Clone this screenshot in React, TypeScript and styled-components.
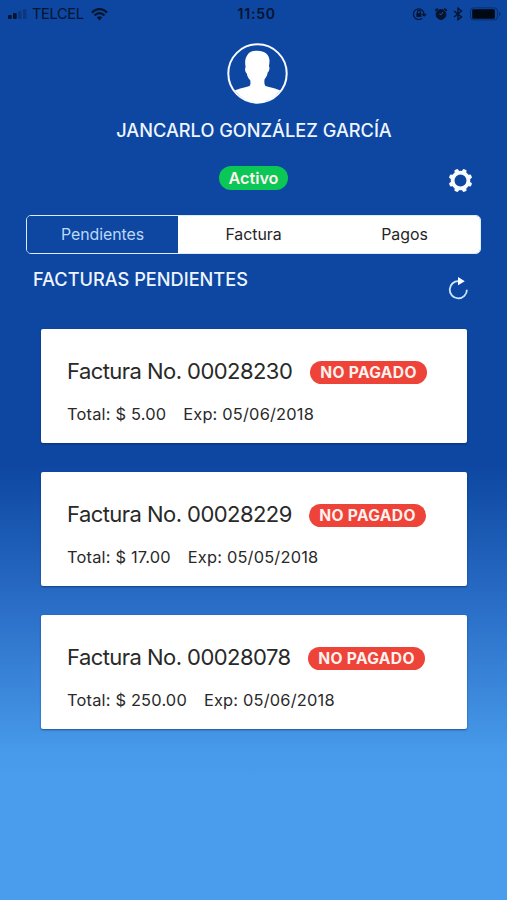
import React from "react";
import styled, { createGlobalStyle } from "styled-components";

const GlobalStyle = createGlobalStyle`
  * { box-sizing: border-box; }
  body { margin: 0; background: #4a9bea; }
`;

const Screen = styled.main`
  width: 507px;
  height: 900px;
  overflow: hidden;
  display: flex;
  flex-direction: column;
  background: linear-gradient(180deg, #0d47a1 0, #0d47a1 465px, #2b6fc8 610px, #4799e9 750px, #4a9cec 780px);
  font-family: Inter, "Liberation Sans", sans-serif;
  color: #fff;
`;

const StatusBar = styled.header`
  height: 28px;
  padding: 0 6px 0 8px;
  display: grid;
  grid-template-columns: 1fr 42px 1fr;
  align-items: center;
  color: #06142f;
`;

const Carrier = styled.div`
  display: flex;
  align-items: center;
  font-size: 14.5px;
  line-height: 28px;
`;

const CarrierName = styled.span`
  margin: 0 7px 0 5px;
  width: 52px;
  letter-spacing: -0.3px;
  white-space: nowrap;
`;

const Clock = styled.time`
  padding-left: 4px;
  text-align: center;
  font-size: 14px;
  font-weight: 600;
  letter-spacing: 0.8px;
  line-height: 28px;
  white-space: nowrap;
`;

const Indicators = styled.div`
  display: flex;
  align-items: center;
  justify-content: flex-end;
`;

const StatusGlyph = styled.span<{ $gap: number }>`
  display: flex;
  margin-right: ${(p) => p.$gap}px;
`;

const Profile = styled.section`
  height: 114px;
  padding-top: 15px;
  padding-left: 7px;
  display: flex;
  flex-direction: column;
  align-items: center;
`;

const Name = styled.h1`
  margin: 14px 7px 0 0;
  padding-left: 1px;
  font-size: 18.2px;
  line-height: 24px;
  font-weight: 500;
  white-space: nowrap;
  color: #eef5ff;
`;

const StateRow = styled.section`
  height: 73px;
  padding: 24px 34px 0;
  display: grid;
  grid-template-columns: 1fr auto 1fr;
  align-items: start;
`;

const Badge = styled.span<{ $tone: "active" | "unpaid" }>`
  height: ${(p) => (p.$tone === "active" ? 24 : 23)}px;
  width: ${(p) => (p.$tone === "active" ? 69 : 117)}px;
  display: flex;
  align-items: center;
  justify-content: center;
  border-radius: 12px;
  font-size: ${(p) => (p.$tone === "active" ? 16.2 : 15.6)}px;
  font-weight: ${(p) => (p.$tone === "active" ? 600 : 700)};
  letter-spacing: ${(p) => (p.$tone === "active" ? 0 : 0.35)}px;
  white-space: nowrap;
  color: #fff1ee;
  background: ${(p) => (p.$tone === "active" ? "#0bc755" : "#ee4338")};
`;

const IconButton = styled.button`
  padding: 0;
  border: 0;
  background: none;
  color: #fff;
  display: flex;
  justify-self: end;
`;

const GearButton = styled(IconButton)`
  margin-top: 2px;
`;

const Tabs = styled.nav`
  height: 39px;
  margin: 0 26px;
  display: grid;
  grid-template-columns: 151px 151px 151px;
  border: 1px solid #dcecff;
  border-radius: 5px;
  overflow: hidden;
`;

const Tab = styled.button<{ $active?: boolean }>`
  border: 0;
  padding: 0;
  font: 400 15.9px/36px Inter, "Liberation Sans", sans-serif;
  letter-spacing: -0.05px;
  color: ${(p) => (p.$active ? "#bcd8fa" : "#252525")};
  background: ${(p) => (p.$active ? "#0d47a1" : "#fff")};
`;

const SectionHeader = styled.section`
  height: 75px;
  padding: 13px 39px 0 33px;
  display: flex;
  justify-content: space-between;
`;

const SectionTitle = styled.h2`
  margin: 0;
  font-size: 18.2px;
  line-height: 24px;
  font-weight: 500;
  white-space: nowrap;
  color: #eef5ff;
`;

const RefreshButton = styled(IconButton)`
  height: 24px;
  margin-top: 10px;
`;

const InvoiceList = styled.section`
  padding: 0 40px 0 41px;
  display: flex;
  flex-direction: column;
  gap: 29px;
`;

const Card = styled.article`
  height: 114px;
  padding: 27px 26px 0;
  border-radius: 2px;
  background: #fff;
  color: #292929;
  box-shadow: 0 1px 2px rgba(8, 32, 70, 0.55);
`;

const CardHeading = styled.div`
  display: flex;
  align-items: center;
  height: 30px;
`;

const InvoiceTitle = styled.h3<{ $width: number }>`
  width: ${(p) => p.$width}px;
  margin: 0;
  font-size: 22px;
  line-height: 30px;
  font-weight: 400;
  letter-spacing: -0.55px;
  white-space: nowrap;
`;

const BadgeSlot = styled.div`
  padding-top: 3px;
`;

const CardDetails = styled.div`
  margin-top: 17px;
  display: flex;
  gap: 17px;
  font-size: 16.4px;
  letter-spacing: 0.19px;
  line-height: 22px;
  white-space: nowrap;
`;

const SignalIcon = () => (
  <svg width="19" height="12" viewBox="0 0 19 12" fill="#06142f">
    <rect x="0" y="7" width="3.7" height="4" rx="1" />
    <rect x="5" y="5" width="3.7" height="6" rx="1" />
    <rect x="10" y="3" width="3.5" height="8" rx="1" opacity=".3" />
    <rect x="15" y="1" width="3.5" height="10" rx="1" opacity=".3" />
  </svg>
);

const WifiIcon = () => (
  <svg width="17" height="13" viewBox="0 0 17 13" fill="none" stroke="#06142f" strokeWidth="2.3">
    <path d="M1 4.7C5-.1 12-.1 16 4.7M3.6 7.6c2.8-3.3 7-3.3 9.8 0" />
    <path d="M5.8 9.6c1.5-1.7 3.9-1.7 5.4 0L8.5 12.6Z" fill="#06142f" stroke="none" />
  </svg>
);

const RotationLockIcon = () => (
  <svg width="15" height="14" viewBox="0 0 15 14" fill="none" stroke="#06142f" strokeWidth="1.2">
    <path d="M10.2 11.2A5.3 5.3 0 1 1 12 7.6M10.2 7l1.9 2 2-2" />
    <rect x="4.4" y="6.1" width="5" height="3.8" fill="#06142f" stroke="none" />
    <path d="M5.4 6V4.8a1.5 1.5 0 0 1 3 0V6" />
  </svg>
);

const AlarmIcon = () => (
  <svg width="14" height="14" viewBox="0 0 14 14" fill="none" stroke="#06142f">
    <circle cx="7" cy="7.5" r="4.9" fill="#06142f" />
    <path d="M1.2 3.8l2.6-2.2M12.8 3.8l-2.6-2.2" strokeWidth="1.8" />
    <path d="M9 5L7 7.8 5.4 7" stroke="#245292" />
  </svg>
);

const BluetoothIcon = () => (
  <svg width="10" height="14" viewBox="0 0 10 14" fill="none" stroke="#06142f" strokeWidth="1.4">
    <path d="M1 4l7.5 6L5 12.7V1.3L8.5 4 1 10" />
  </svg>
);

const BatteryIcon = () => (
  <svg width="31" height="14" viewBox="0 0 31 14">
    <rect x=".5" y=".9" width="27" height="12" rx="3" fill="none" stroke="#092e6b" />
    <rect x="2.2" y="2.2" width="22.6" height="9.6" rx="1" fill="#020914" />
    <path d="M29 5v4c2-.5 2-3.5 0-4Z" fill="#092e6b" />
  </svg>
);

const AvatarIcon = () => (
  <svg width="61" height="62" viewBox="0 0 61 61">
    <circle cx="30.5" cy="30.5" r="29.2" fill="none" stroke="#f8fbff" strokeWidth="2" />
    <path
      fill="#fff"
      d="M8 47.5c3.5-2 11-3 14.4-4.5 1.4-.8 1.1-4 .8-5.8-1.8-1.8-3-4.2-3.4-6.8-1.5-.7-2.4-4.5-1.2-6.2-.8-4.3-.8-9 1.8-12.2C22.3 8.8 26 7.8 30.5 7.8c7 0 11.7 3.7 12 9.6.1 2.2-.2 4-.6 5.8 1.2 1.3.3 5.4-1.2 6.2-.4 2.7-1.5 5-3.1 6.8-.4 2.1-.5 5 .9 6.8C43 44.6 49.5 45.5 53 47.5A29 29 0 0 1 8 47.5Z"
    />
    <path fill="#fff" d="M8 47.5h45A28.5 28.5 0 0 1 30.5 59.5 28.5 28.5 0 0 1 8 47.5Z" />
  </svg>
);

const toothAngles = [22.5, 67.5, 112.5, 157.5, 202.5, 247.5, 292.5, 337.5];

const GearIcon = () => (
  <svg width="25" height="25" viewBox="0 0 25 25" fill="#f8fbff">
    <circle cx="12.5" cy="12.5" r="7.9" fill="none" stroke="#f8fbff" strokeWidth="3.8" />
    {toothAngles.map((angle) => (
      <path key={angle} d="M9.8 4.5L10.7.9Q12.5.3 14.3.9L15.2 4.5Z" transform={`rotate(${angle} 12.5 12.5)`} />
    ))}
  </svg>
);

const RefreshIcon = () => (
  <svg width="20" height="23" viewBox="0 0 20 23">
    <path d="M11 4.2A8.6 8.6 0 1 0 18.9 12.7" fill="none" stroke="#cde6ff" strokeWidth="1.8" />
    <path d="M10 0L16.8 4.3 10 8.2Z" fill="#fff" />
  </svg>
);

const invoices = [
  { number: "00028230", total: "5.00", expires: "05/06/2018", titleWidth: 243 },
  { number: "00028229", total: "17.00", expires: "05/05/2018", titleWidth: 242 },
  { number: "00028078", total: "250.00", expires: "05/06/2018", titleWidth: 241 },
];

export default function App() {
  return (
    <>
      <GlobalStyle />
      <Screen>
        <StatusBar>
          <Carrier>
            <SignalIcon />
            <CarrierName>TELCEL</CarrierName>
            <WifiIcon />
          </Carrier>
          <Clock>11:50</Clock>
          <Indicators>
            <StatusGlyph $gap={7}><RotationLockIcon /></StatusGlyph>
            <StatusGlyph $gap={5}><AlarmIcon /></StatusGlyph>
            <StatusGlyph $gap={7}><BluetoothIcon /></StatusGlyph>
            <BatteryIcon />
          </Indicators>
        </StatusBar>
        <Profile>
          <AvatarIcon />
          <Name>JANCARLO GONZÁLEZ GARCÍA</Name>
        </Profile>
        <StateRow>
          <span />
          <Badge $tone="active">Activo</Badge>
          <GearButton aria-label="Ajustes"><GearIcon /></GearButton>
        </StateRow>
        <Tabs>
          <Tab $active>Pendientes</Tab>
          <Tab>Factura</Tab>
          <Tab>Pagos</Tab>
        </Tabs>
        <SectionHeader>
          <SectionTitle>FACTURAS PENDIENTES</SectionTitle>
          <RefreshButton aria-label="Actualizar"><RefreshIcon /></RefreshButton>
        </SectionHeader>
        <InvoiceList>
          {invoices.map((invoice) => (
            <Card key={invoice.number}>
              <CardHeading>
                <InvoiceTitle $width={invoice.titleWidth}>Factura No. {invoice.number}</InvoiceTitle>
                <BadgeSlot><Badge $tone="unpaid">NO PAGADO</Badge></BadgeSlot>
              </CardHeading>
              <CardDetails>
                <span>Total: $ {invoice.total}</span>
                <span>Exp: {invoice.expires}</span>
              </CardDetails>
            </Card>
          ))}
        </InvoiceList>
      </Screen>
    </>
  );
}
